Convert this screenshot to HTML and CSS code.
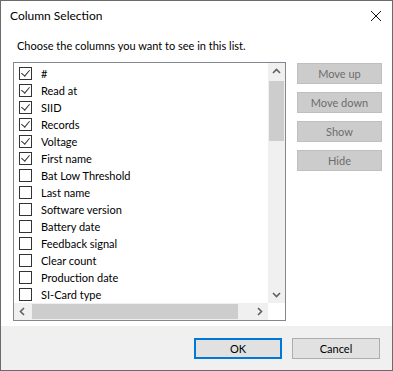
FILE: index.html
```html
<!DOCTYPE html>
<html lang="en">
<head>
    <meta charset="UTF-8">
    <title>Column Selection</title>
    <link rel="stylesheet" href="styles.css">
</head>
<body>
    <div class="dialog">
        <div class="titlebar">
            <span class="title">Column Selection</span>
            <svg class="close" width="12" height="12" viewBox="0 0 12 12">
                <path d="M1 1 L11 11 M11 1 L1 11" stroke="#111" stroke-width="1" fill="none"/>
            </svg>
        </div>

        <div class="main">
            <p class="hint">Choose the columns you want to see in this list.</p>

            <div class="content">
                <div class="listbox">
                    <div class="list-area">
                        <ul class="items">
                            <li><span class="box checked"></span>#</li>
                            <li><span class="box checked"></span>Read at</li>
                            <li><span class="box checked"></span>SIID</li>
                            <li><span class="box checked"></span>Records</li>
                            <li><span class="box checked"></span>Voltage</li>
                            <li><span class="box checked"></span>First name</li>
                            <li><span class="box"></span>Bat Low Threshold</li>
                            <li><span class="box"></span>Last name</li>
                            <li><span class="box"></span>Software version</li>
                            <li><span class="box"></span>Battery date</li>
                            <li><span class="box"></span>Feedback signal</li>
                            <li><span class="box"></span>Clear count</li>
                            <li><span class="box"></span>Production date</li>
                            <li><span class="box"></span>SI-Card type</li>
                        </ul>
                        <div class="vscroll">
                            <svg class="arrow" width="17" height="17" viewBox="0 0 17 17">
                                <path d="M5 10 L8.5 6.5 L12 10" stroke="#606060" stroke-width="1.6" fill="none"/>
                            </svg>
                            <div class="vtrack"><div class="vthumb"></div></div>
                            <svg class="arrow" width="17" height="17" viewBox="0 0 17 17">
                                <path d="M5 7 L8.5 10.5 L12 7" stroke="#606060" stroke-width="1.6" fill="none"/>
                            </svg>
                        </div>
                    </div>
                    <div class="hscroll">
                        <svg class="arrow" width="17" height="17" viewBox="0 0 17 17">
                            <path d="M10 5 L6.5 8.5 L10 12" stroke="#606060" stroke-width="1.6" fill="none"/>
                        </svg>
                        <div class="htrack"><div class="hthumb"></div></div>
                        <svg class="arrow" width="17" height="17" viewBox="0 0 17 17">
                            <path d="M7 5 L10.5 8.5 L7 12" stroke="#606060" stroke-width="1.6" fill="none"/>
                        </svg>
                        <div class="corner"></div>
                    </div>
                </div>

                <div class="side-buttons">
                    <button class="btn-disabled">Move up</button>
                    <button class="btn-disabled">Move down</button>
                    <button class="btn-disabled">Show</button>
                    <button class="btn-disabled">Hide</button>
                </div>
            </div>
        </div>

        <div class="footer">
            <button class="btn btn-default">OK</button>
            <button class="btn">Cancel</button>
        </div>
    </div>
</body>
</html>
```

FILE: styles.css
```css
/* General Styling */
body {
    margin: 0;
    padding: 0;
    background-color: #fff;
    font-family: 'Lato', 'Liberation Sans', sans-serif;
    font-size: 11px;
    color: #000;
}

.dialog {
    width: 393px;
    height: 371px;
    box-sizing: border-box;
    border: 1px solid #6b6b6b;
    display: flex;
    flex-direction: column;
    background-color: #fff;
}

.titlebar {
    height: 29px;
    display: flex;
    align-items: center;
    justify-content: space-between;
    padding: 0 9px 0 9px;
}

.title {
    font-size: 12px;
    line-height: 16px;
}

.close {
    margin-right: 1px;
}

.main {
    flex: 1;
    padding: 0 12px;
}

.hint {
    margin: 8px 0 8px 4px;
    line-height: 16px;
}

.content {
    display: flex;
    gap: 11px;
}

/* List box */
.listbox {
    flex: none;
    width: 273px;
    height: 259px;
    box-sizing: border-box;
    border: 1px solid #828790;
    display: flex;
    flex-direction: column;
}

.list-area {
    flex: 1;
    display: flex;
    min-height: 0;
}

.items {
    flex: 1;
    list-style-type: none;
    margin: 0;
    padding: 2px 0 0 5px;
    overflow: hidden;
}

.items li {
    height: 17px;
    display: flex;
    align-items: center;
    white-space: nowrap;
}

.box {
    flex: none;
    width: 13px;
    height: 13px;
    box-sizing: border-box;
    border: 1px solid #333;
    background-color: #fff;
    margin-right: 9px;
    position: relative;
}

.box.checked::after {
    content: '';
    position: absolute;
    left: 3px;
    top: 0px;
    width: 4px;
    height: 7px;
    border-right: 1px solid #333;
    border-bottom: 1px solid #333;
    transform: rotate(40deg);
}

.vscroll {
    width: 17px;
    display: flex;
    flex-direction: column;
    background-color: #f0f0f0;
}

.arrow {
    display: block;
    flex: none;
}

.vtrack {
    flex: 1;
}

.vthumb {
    margin: 1px 1px 0 1px;
    height: 60px;
    background-color: #cdcdcd;
}

.hscroll {
    height: 17px;
    display: flex;
    background-color: #f0f0f0;
}

.htrack {
    flex: 1;
}

.hthumb {
    margin: 1px 0 0 1px;
    width: 206px;
    height: 15px;
    background-color: #cdcdcd;
}

.corner {
    width: 17px;
    background-color: #fff;
}

/* Side buttons */
.side-buttons {
    flex: none;
    display: flex;
    flex-direction: column;
    gap: 8px;
    margin-top: 1px;
}

.btn-disabled {
    width: 85px;
    height: 21px;
    border: 1px solid #bfbfbf;
    background-color: #cccccc;
    color: #6d6d6d;
    font-family: inherit;
    font-size: inherit;
    padding: 0;
}

/* Footer */
.footer {
    height: 44px;
    box-sizing: border-box;
    background-color: #f0f0f0;
    display: flex;
    justify-content: flex-end;
    gap: 10px;
    padding: 12px 12px 0 0;
}

.btn {
    width: 88px;
    height: 21px;
    box-sizing: border-box;
    border: 1px solid #adadad;
    background-color: #e1e1e1;
    font-family: inherit;
    font-size: inherit;
    color: #000;
    padding: 0;
}

.btn-default {
    border: 2px solid #0078d7;
}
```
